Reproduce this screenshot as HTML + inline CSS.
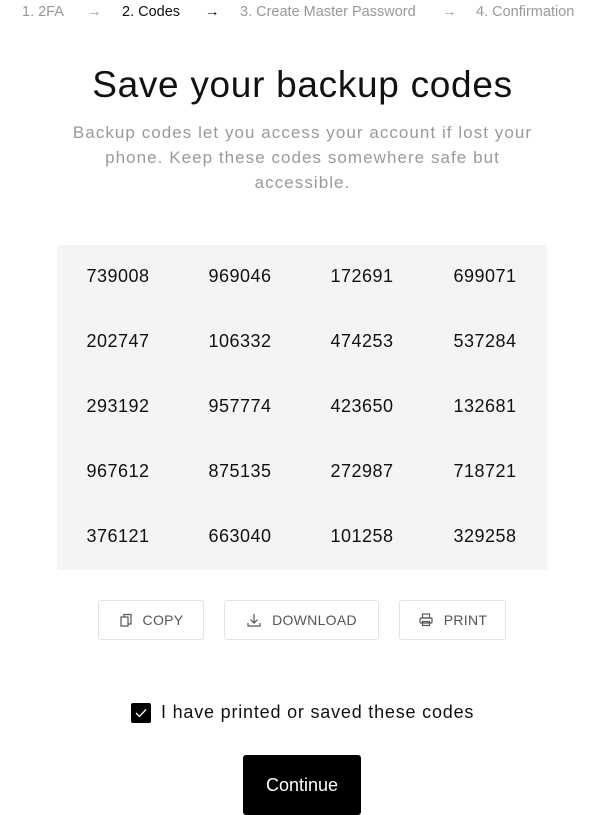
<!DOCTYPE html>
<html><head><meta charset="utf-8"><style>
*{margin:0;padding:0;box-sizing:border-box}
body{width:605px;height:812px;overflow:hidden;background:#fff;font-family:"Liberation Sans",sans-serif;position:relative;color:#111}
.a{position:absolute;white-space:nowrap}
.st{top:4px;font-size:14.5px;color:#999}
h1{position:absolute;top:64px;left:0;width:605px;text-align:center;font-weight:normal;font-size:37px;letter-spacing:0.7px;color:#111}
.sub{position:absolute;top:120px;left:0;width:605px;text-align:center;font-size:17px;line-height:25px;color:#9a9a9a;letter-spacing:1.05px;white-space:nowrap}
.box{position:absolute;left:57px;top:245px;width:490px;height:325px;background:#f3f4f6;border-radius:2px}
.c{position:absolute;font-size:18px;width:100px;text-align:center;letter-spacing:0.5px;color:#111}
.btn{position:absolute;top:600px;height:40px;border:1px solid #e3e3e3;border-radius:3px;font-size:14px;color:#555;display:flex;align-items:center;justify-content:center;gap:10px;letter-spacing:0.3px}
</style></head><body>
<div class="a st" style="left:22px">1. 2FA</div>
<div class="a st" style="left:87px">→</div>
<div class="a st" style="left:122px;color:#111">2. Codes</div>
<div class="a st" style="left:205px;color:#111">→</div>
<div class="a st" style="left:240px">3. Create Master Password</div>
<div class="a st" style="left:442px">→</div>
<div class="a st" style="left:476px">4. Confirmation</div>
<h1>Save your backup codes</h1>
<div class="sub">Backup codes let you access your account if lost your<br>phone. Keep these codes somewhere safe but<br>accessible.</div>
<div class="box"></div>
<div class="c" style="left:68px;top:266px">739008</div><div class="c" style="left:190px;top:266px">969046</div><div class="c" style="left:312px;top:266px">172691</div><div class="c" style="left:435px;top:266px">699071</div>
<div class="c" style="left:68px;top:331px">202747</div><div class="c" style="left:190px;top:331px">106332</div><div class="c" style="left:312px;top:331px">474253</div><div class="c" style="left:435px;top:331px">537284</div>
<div class="c" style="left:68px;top:396px">293192</div><div class="c" style="left:190px;top:396px">957774</div><div class="c" style="left:312px;top:396px">423650</div><div class="c" style="left:435px;top:396px">132681</div>
<div class="c" style="left:68px;top:461px">967612</div><div class="c" style="left:190px;top:461px">875135</div><div class="c" style="left:312px;top:461px">272987</div><div class="c" style="left:435px;top:461px">718721</div>
<div class="c" style="left:68px;top:526px">376121</div><div class="c" style="left:190px;top:526px">663040</div><div class="c" style="left:312px;top:526px">101258</div><div class="c" style="left:435px;top:526px">329258</div>
<div class="btn" style="left:98px;width:106px"><svg width="14" height="14" viewBox="0 0 14 14" fill="none" stroke="#555" stroke-width="1.2"><rect x="2" y="4" width="7" height="9"/><path d="M5 4V1.5h7V11H9"/></svg>COPY</div>
<div class="btn" style="left:224px;width:155px"><svg width="16" height="16" viewBox="0 0 16 16" fill="none" stroke="#555" stroke-width="1.2"><path d="M8 2v9M4.5 7.5 8 11l3.5-3.5M2 11v3h12v-3"/></svg>DOWNLOAD</div>
<div class="btn" style="left:399px;width:107px"><svg width="16" height="16" viewBox="0 0 16 16" fill="none" stroke="#555" stroke-width="1.2"><rect x="4.5" y="2" width="7" height="4"/><rect x="2" y="6" width="12" height="5" rx="1"/><rect x="4.5" y="9.5" width="7" height="4"/></svg>PRINT</div>
<div class="a" style="left:131px;top:703px;width:20px;height:20px;background:#000;border-radius:2px"><svg width="20" height="20" viewBox="0 0 20 20" fill="none" stroke="#fff" stroke-width="1.3"><path d="M5 10l3.5 3.5L15 6.5"/></svg></div>
<div class="a" style="left:161px;top:702px;font-size:18px;letter-spacing:0.8px;color:#111">I have printed or saved these codes</div>
<div class="a" style="left:243px;top:755px;width:118px;height:60px;background:#000;border-radius:3px;color:#fff;font-size:18px;text-align:center;line-height:60px">Continue</div>
</body></html>
